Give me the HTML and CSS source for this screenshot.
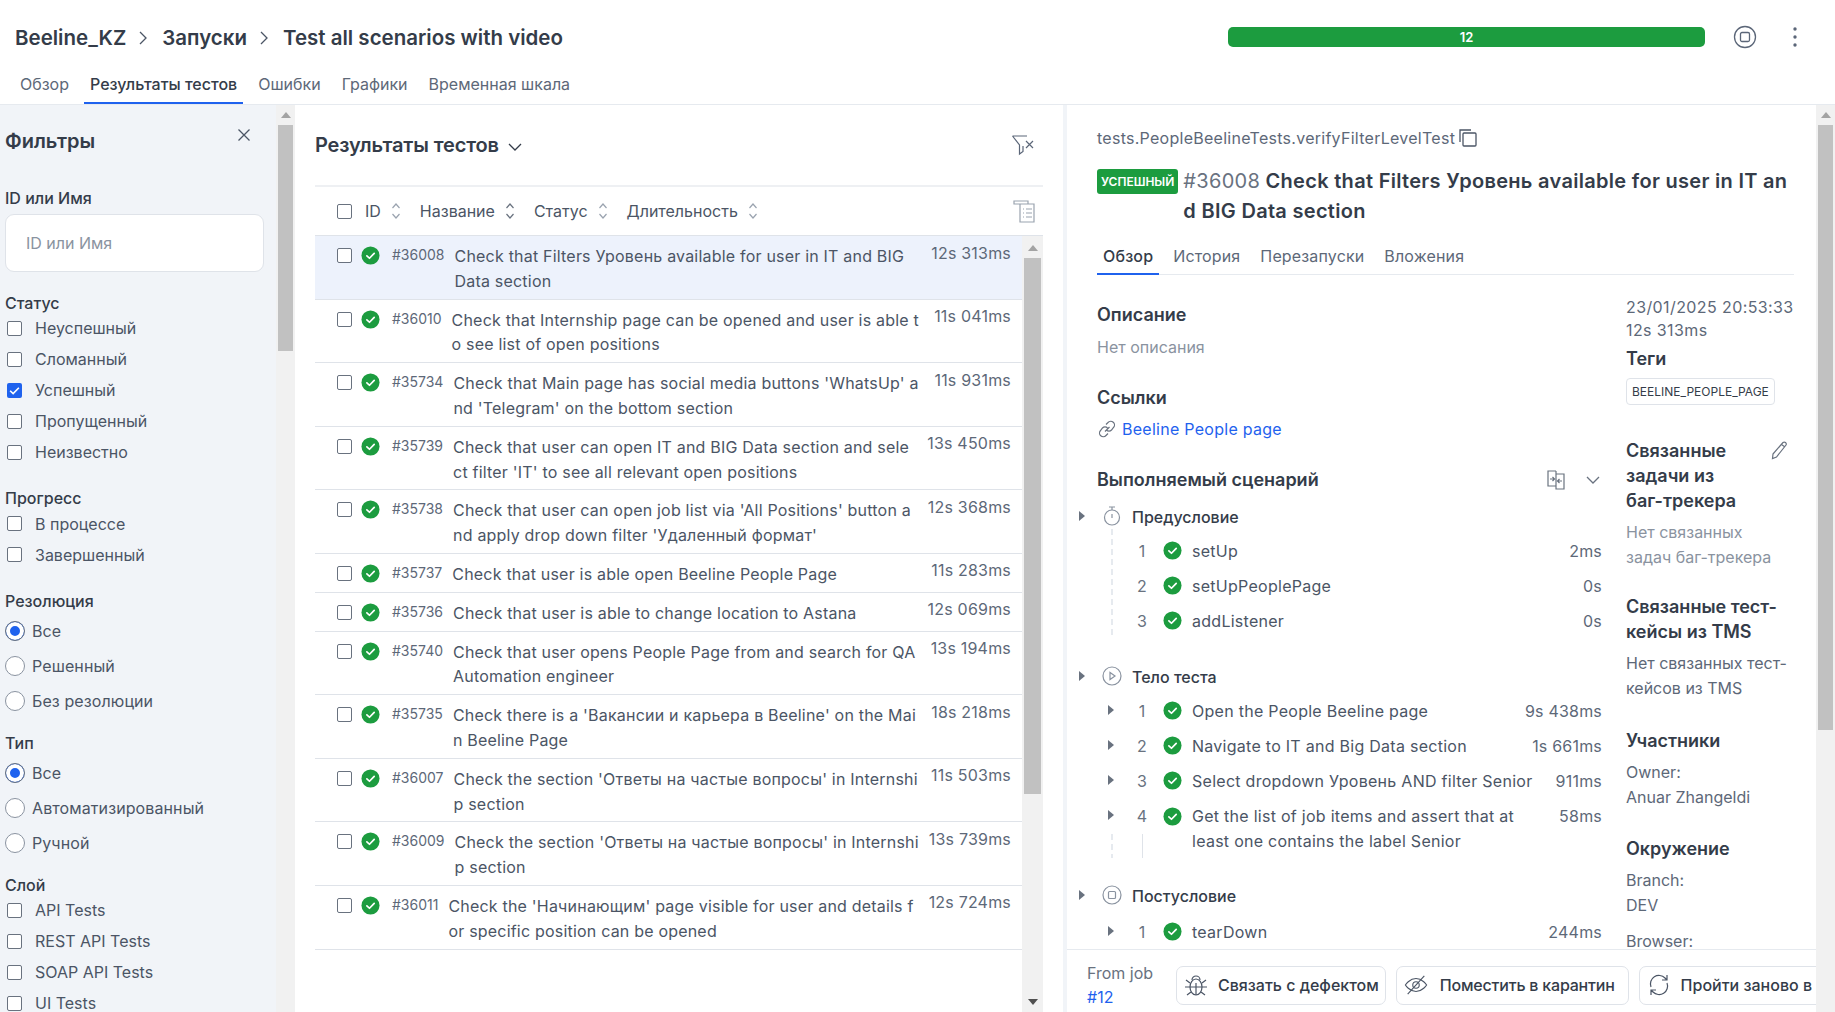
FILE: index.html
```html
<!DOCTYPE html>
<html lang="ru">

<head>
    <meta charset="UTF-8">
    <title>Test all scenarios with video</title>
    <link rel="stylesheet" href="styles.css">
</head>

<body>

    <svg class="defs" width="0" height="0">
        <symbol id="ok" viewBox="0 0 20 20">
            <circle cx="10" cy="10" r="9.5" fill="#1c9c3f"></circle>
            <path d="M6.2 10.3l2.7 2.6 5-5.2" fill="none" stroke="#fff" stroke-width="1.8" stroke-linecap="round" stroke-linejoin="round"></path>
        </symbol>
        <symbol id="chev-r" viewBox="0 0 12 16">
            <path d="M3 2l6 6-6 6" fill="none" stroke="currentColor" stroke-width="1.3"></path>
        </symbol>
        <symbol id="chev-d" viewBox="0 0 16 12">
            <path d="M2 3l6 6 6-6" fill="none" stroke="currentColor" stroke-width="1.3"></path>
        </symbol>
        <symbol id="sort" viewBox="0 0 10 18">
            <path d="M1.5 6L5 2l3.5 4M1.5 12L5 16l3.5-4" fill="none" stroke="currentColor" stroke-width="1.2"></path>
        </symbol>
        <symbol id="tri" viewBox="0 0 8 12">
            <path d="M1 1l6 5-6 5z" fill="#69727f"></path>
        </symbol>
    </svg>

    <div class="app">
        <header class="topbar">
            <div class="topbar-row">
                <div class="crumbs">
                    <span>Beeline_KZ</span>
                    <svg class="crumb-sep"><use href="#chev-r"></use></svg>
                    <span>Запуски</span>
                    <svg class="crumb-sep"><use href="#chev-r"></use></svg>
                    <span>Test all scenarios with video</span>
                </div>
                <div class="progress">12</div>
                <svg class="stop-btn" viewBox="0 0 24 24" fill="none" stroke="#5b6678" stroke-width="1.3">
                    <circle cx="12" cy="12" r="10.5"></circle>
                    <rect x="7.5" y="7.5" width="9" height="9" rx="1.5"></rect>
                </svg>
                <svg class="dots" viewBox="0 0 6 20" fill="#5b6678">
                    <circle cx="3" cy="2" r="1.7"></circle>
                    <circle cx="3" cy="10" r="1.7"></circle>
                    <circle cx="3" cy="18" r="1.7"></circle>
                </svg>
            </div>
            <nav class="tabs">
                <a class="tab">Обзор</a>
                <a class="tab active">Результаты тестов</a>
                <a class="tab">Ошибки</a>
                <a class="tab">Графики</a>
                <a class="tab">Временная шкала</a>
            </nav>
        </header>

        <main class="main">
            <aside class="filters">
                <div class="filters-body">
                    <div class="filters-head">
                        <h2>Фильтры</h2>
                        <svg class="close" viewBox="0 0 14 14" fill="none" stroke="#4b5565" stroke-width="1.3">
                            <path d="M1.5 1.5l11 11M12.5 1.5l-11 11"></path>
                        </svg>
                    </div>

                    <div class="f-title first">ID или Имя</div>
                    <div class="f-input">ID или Имя</div>

                    <div class="f-title">Статус</div>
                    <label class="f-check"><i class="box"></i>Неуспешный</label>
                    <label class="f-check"><i class="box"></i>Сломанный</label>
                    <label class="f-check"><i class="box on"><svg viewBox="0 0 12 12"><path d="M2.5 6.2l2.4 2.3 4.6-4.7" fill="none" stroke="#fff" stroke-width="1.3"></path></svg></i>Успешный</label>
                    <label class="f-check"><i class="box"></i>Пропущенный</label>
                    <label class="f-check"><i class="box"></i>Неизвестно</label>

                    <div class="f-title">Прогресс</div>
                    <label class="f-check"><i class="box"></i>В процессе</label>
                    <label class="f-check"><i class="box"></i>Завершенный</label>

                    <div class="f-title">Резолюция</div>
                    <label class="f-radio"><i class="dot on"></i>Все</label>
                    <label class="f-radio"><i class="dot"></i>Решенный</label>
                    <label class="f-radio"><i class="dot"></i>Без резолюции</label>

                    <div class="f-title tight">Тип</div>
                    <label class="f-radio"><i class="dot on"></i>Все</label>
                    <label class="f-radio"><i class="dot"></i>Автоматизированный</label>
                    <label class="f-radio"><i class="dot"></i>Ручной</label>

                    <div class="f-title tight">Слой</div>
                    <label class="f-check"><i class="box"></i>API Tests</label>
                    <label class="f-check"><i class="box"></i>REST API Tests</label>
                    <label class="f-check"><i class="box"></i>SOAP API Tests</label>
                    <label class="f-check"><i class="box"></i>UI Tests</label>
                </div>
                <div class="scrollbar">
                    <span class="arrow up"></span>
                    <span class="thumb thumb-filters"></span>
                </div>
            </aside>

            <section class="results">
                <div class="results-head">
                    <h2>Результаты тестов</h2>
                    <svg class="title-chev"><use href="#chev-d"></use></svg>
                    <svg class="clear-filter" viewBox="0 0 24 24" fill="none" stroke="#5b6678" stroke-width="1.2">
                        <path d="M1.5 3h14.5M1.5 3l7 9v9l3.5-2.5V13"></path>
                        <path d="M15 8l7 7M22 8l-7 7"></path>
                    </svg>
                </div>
                <div class="table-head">
                    <i class="box"></i>
                    <span class="th th-id">ID</span><svg class="sort"><use href="#sort"></use></svg>
                    <span class="th th-name">Название</span><svg class="sort dark"><use href="#sort"></use></svg>
                    <span class="th th-status">Статус</span><svg class="sort"><use href="#sort"></use></svg>
                    <span class="th th-time">Длительность</span><svg class="sort"><use href="#sort"></use></svg>
                    <svg class="columns" viewBox="0 0 22 23" fill="none" stroke="#9aa3af" stroke-width="1.2">
                        <path d="M1 1h14v3H1zM1 4v0M7 4h14v18H7zM10 9h1M13 9h6M10 13h1M13 13h6M10 17h1M13 17h6"></path>
                    </svg>
                </div>
                <div class="table-wrap">
                    <div class="rows">
                        <div class="row selected">
                            <i class="box"></i><svg class="ok"><use href="#ok"></use></svg>
                            <span class="row-id">#36008</span>
                            <span class="row-name">Check that Filters Уровень available for user in IT and BIG<br>Data section</span>
                            <span class="row-time">12s 313ms</span>
                        </div>
                        <div class="row">
                            <i class="box"></i><svg class="ok"><use href="#ok"></use></svg>
                            <span class="row-id">#36010</span>
                            <span class="row-name">Check that Internship page can be opened and user is able t<br>o see list of open positions</span>
                            <span class="row-time">11s 041ms</span>
                        </div>
                        <div class="row">
                            <i class="box"></i><svg class="ok"><use href="#ok"></use></svg>
                            <span class="row-id">#35734</span>
                            <span class="row-name">Check that Main page has social media buttons 'WhatsUp' a<br>nd 'Telegram' on the bottom section</span>
                            <span class="row-time">11s 931ms</span>
                        </div>
                        <div class="row">
                            <i class="box"></i><svg class="ok"><use href="#ok"></use></svg>
                            <span class="row-id">#35739</span>
                            <span class="row-name">Check that user can open IT and BIG Data section and sele<br>ct filter 'IT' to see all relevant open positions</span>
                            <span class="row-time">13s 450ms</span>
                        </div>
                        <div class="row">
                            <i class="box"></i><svg class="ok"><use href="#ok"></use></svg>
                            <span class="row-id">#35738</span>
                            <span class="row-name">Check that user can open job list via 'All Positions' button a<br>nd apply drop down filter 'Удаленный формат'</span>
                            <span class="row-time">12s 368ms</span>
                        </div>
                        <div class="row">
                            <i class="box"></i><svg class="ok"><use href="#ok"></use></svg>
                            <span class="row-id">#35737</span>
                            <span class="row-name">Check that user is able open Beeline People Page</span>
                            <span class="row-time">11s 283ms</span>
                        </div>
                        <div class="row">
                            <i class="box"></i><svg class="ok"><use href="#ok"></use></svg>
                            <span class="row-id">#35736</span>
                            <span class="row-name">Check that user is able to change location to Astana</span>
                            <span class="row-time">12s 069ms</span>
                        </div>
                        <div class="row">
                            <i class="box"></i><svg class="ok"><use href="#ok"></use></svg>
                            <span class="row-id">#35740</span>
                            <span class="row-name">Check that user opens People Page from and search for QA<br>Automation engineer</span>
                            <span class="row-time">13s 194ms</span>
                        </div>
                        <div class="row">
                            <i class="box"></i><svg class="ok"><use href="#ok"></use></svg>
                            <span class="row-id">#35735</span>
                            <span class="row-name">Check there is a 'Вакансии и карьера в Beeline' on the Mai<br>n Beeline Page</span>
                            <span class="row-time">18s 218ms</span>
                        </div>
                        <div class="row">
                            <i class="box"></i><svg class="ok"><use href="#ok"></use></svg>
                            <span class="row-id">#36007</span>
                            <span class="row-name">Check the section 'Ответы на частые вопросы' in Internshi<br>p section</span>
                            <span class="row-time">11s 503ms</span>
                        </div>
                        <div class="row">
                            <i class="box"></i><svg class="ok"><use href="#ok"></use></svg>
                            <span class="row-id">#36009</span>
                            <span class="row-name">Check the section 'Ответы на частые вопросы' in Internshi<br>p section</span>
                            <span class="row-time">13s 739ms</span>
                        </div>
                        <div class="row">
                            <i class="box"></i><svg class="ok"><use href="#ok"></use></svg>
                            <span class="row-id">#36011</span>
                            <span class="row-name">Check the 'Начинающим' page visible for user and details f<br>or specific position can be opened</span>
                            <span class="row-time">12s 724ms</span>
                        </div>
                    </div>
                    <div class="scrollbar thin">
                        <span class="arrow up"></span>
                        <span class="thumb thumb-rows"></span>
                        <span class="arrow down"></span>
                    </div>
                </div>
            </section>

            <section class="details">
                <div class="details-scroll">
                    <div class="path">
                        <span>tests.PeopleBeelineTests.verifyFilterLevelTest</span>
                        <svg class="copy" viewBox="0 0 18 18" fill="none" stroke="#4b5565" stroke-width="1.3">
                            <path d="M1 13V1h11"></path>
                            <rect x="4" y="4" width="13" height="13" rx="1"></rect>
                        </svg>
                    </div>
                    <div class="test-title">
                        <span class="badge">УСПЕШНЫЙ</span>
                        <h1><span class="test-id">#36008</span> Check that Filters Уровень available for user in IT an<br>d BIG Data section</h1>
                    </div>
                    <nav class="subtabs">
                        <a class="subtab active">Обзор</a>
                        <a class="subtab">История</a>
                        <a class="subtab">Перезапуски</a>
                        <a class="subtab">Вложения</a>
                    </nav>

                    <div class="columns-wrap">
                        <div class="col-main">
                            <h3>Описание</h3>
                            <p class="muted">Нет описания</p>
                            <h3 class="links-h">Ссылки</h3>
                            <a class="link">
                                <svg class="link-ico" viewBox="0 0 20 20" fill="none" stroke="#69727f" stroke-width="1.2">
                                    <path d="M8 12.5l4.5-4.5M9 5.5l2-2a3.5 3.5 0 0 1 5.5 5l-2 2.5a3.5 3.5 0 0 1-5 0M11 14.5l-2 2a3.5 3.5 0 0 1-5.5-5l2-2.5a3.5 3.5 0 0 1 5 0"></path>
                                </svg>
                                Beeline People page
                            </a>
                            <div class="scenario-head">
                                <h3>Выполняемый сценарий</h3>
                                <svg class="split" viewBox="0 0 18 20" fill="none" stroke="#69727f" stroke-width="1.2">
                                    <path d="M9 1H1v15h8M9 1v18h8V4H9M3 9h4M5.5 7L7.5 9l-2 2M15 11h-4M12.5 9l-2 2 2 2"></path>
                                </svg>
                                <svg class="scenario-chev"><use href="#chev-d"></use></svg>
                            </div>

                            <div class="stage">
                                <svg class="tri"><use href="#tri"></use></svg>
                                <svg class="stage-ico" viewBox="0 0 18 20" fill="none" stroke="#8a93a0" stroke-width="1.2">
                                    <circle cx="9" cy="11.5" r="7.5"></circle>
                                    <path d="M6 1h6M9 1v3M9 8v4"></path>
                                </svg>
                                <span>Предусловие</span>
                            </div>
                            <div class="steps guide">
                                <div class="step"><span class="num">1</span><svg class="ok"><use href="#ok"></use></svg><span class="step-name">setUp</span><span class="step-time">2ms</span></div>
                                <div class="step"><span class="num">2</span><svg class="ok"><use href="#ok"></use></svg><span class="step-name">setUpPeoplePage</span><span class="step-time">0s</span></div>
                                <div class="step"><span class="num">3</span><svg class="ok"><use href="#ok"></use></svg><span class="step-name">addListener</span><span class="step-time">0s</span></div>
                            </div>

                            <div class="stage body-stage">
                                <svg class="tri"><use href="#tri"></use></svg>
                                <svg class="stage-ico" viewBox="0 0 20 20" fill="none" stroke="#8a93a0" stroke-width="1.2">
                                    <circle cx="10" cy="10" r="9"></circle>
                                    <path d="M8 6.5v7l5-3.5z"></path>
                                </svg>
                                <span>Тело теста</span>
                            </div>
                            <div class="steps">
                                <div class="step"><svg class="tri step-tri"><use href="#tri"></use></svg><span class="num">1</span><svg class="ok"><use href="#ok"></use></svg><span class="step-name">Open the People Beeline page</span><span class="step-time">9s 438ms</span></div>
                                <div class="step"><svg class="tri step-tri"><use href="#tri"></use></svg><span class="num">2</span><svg class="ok"><use href="#ok"></use></svg><span class="step-name">Navigate to IT and Big Data section</span><span class="step-time">1s 661ms</span></div>
                                <div class="step"><svg class="tri step-tri"><use href="#tri"></use></svg><span class="num">3</span><svg class="ok"><use href="#ok"></use></svg><span class="step-name">Select dropdown Уровень AND filter Senior</span><span class="step-time">911ms</span></div>
                                <div class="step step-long"><svg class="tri step-tri"><use href="#tri"></use></svg><span class="num">4</span><svg class="ok"><use href="#ok"></use></svg><span class="step-name">Get the list of job items and assert that at<br>least one contains the label Senior</span><span class="step-time">58ms</span></div>
                            </div>

                            <div class="stage post-stage">
                                <svg class="tri"><use href="#tri"></use></svg>
                                <svg class="stage-ico" viewBox="0 0 20 20" fill="none" stroke="#8a93a0" stroke-width="1.2">
                                    <circle cx="10" cy="10" r="9"></circle>
                                    <rect x="6.5" y="6.5" width="7" height="7" rx="1"></rect>
                                </svg>
                                <span>Постусловие</span>
                            </div>
                            <div class="steps">
                                <div class="step"><svg class="tri step-tri"><use href="#tri"></use></svg><span class="num">1</span><svg class="ok"><use href="#ok"></use></svg><span class="step-name">tearDown</span><span class="step-time">244ms</span></div>
                            </div>
                        </div>

                        <div class="col-side">
                            <div class="stamp">23/01/2025 20:53:33<br>12s 313ms</div>
                            <h3 class="tags-h">Теги</h3>
                            <span class="tag">BEELINE_PEOPLE_PAGE</span>

                            <div class="side-edit">
                                <h3>Связанные<br>задачи из<br>баг-трекера</h3>
                                <svg class="pencil" viewBox="0 0 18 20" fill="none" stroke="#69727f" stroke-width="1.2">
                                    <path d="M2 14L12 2.5a2 2 0 0 1 3 2.5L5.5 17 1.5 18.5zM10.5 4.5l3.5 2.5"></path>
                                </svg>
                            </div>
                            <p class="muted side-note">Нет связанных<br>задач баг-трекера</p>

                            <h3 class="side-h">Связанные тест-<br>кейсы из TMS</h3>
                            <p class="side-note dim">Нет связанных тест-<br>кейсов из TMS</p>

                            <h3 class="side-h people">Участники</h3>
                            <p class="side-note dim">Owner:<br>Anuar Zhangeldi</p>

                            <h3 class="side-h env">Окружение</h3>
                            <p class="side-note dim">Branch:<br>DEV</p>
                            <p class="side-note dim browser">Browser:</p>
                        </div>
                    </div>
                </div>

                <footer class="actions">
                    <div class="job">From job<br><a>#12</a></div>
                    <button class="act defect">
                        <svg viewBox="0 0 24 24" fill="none" stroke="#4b5565" stroke-width="1.2">
                            <ellipse cx="12" cy="14" rx="6" ry="8"></ellipse>
                            <path d="M8 7a4 4 0 0 1 8 0M6 14h12M12 10v12M6 10L2 7M18 10l4-3M6 14H1M18 14h5M7 19l-4 3M17 19l4 3"></path>
                        </svg>
                        Связать с дефектом
                    </button>
                    <button class="act quarantine">
                        <svg viewBox="0 0 26 24" fill="none" stroke="#4b5565" stroke-width="1.2">
                            <path d="M1.5 12S6 5 13 5s11.5 7 11.5 7-4.5 7-11.5 7S1.5 12 1.5 12z"></path>
                            <circle cx="13" cy="12" r="3.5"></circle>
                            <path d="M4 22L22 2"></path>
                        </svg>
                        Поместить в карантин
                    </button>
                    <button class="act last">
                        <svg viewBox="0 0 24 24" fill="none" stroke="#4b5565" stroke-width="1.2">
                            <path d="M4 14a8.5 8.5 0 0 1 14-9l2 2M20 2v5h-5M20 10a8.5 8.5 0 0 1-14 9l-2-2M4 22v-5h5"></path>
                        </svg>
                        Пройти заново в
                    </button>
                </footer>
            </section>

            <div class="scrollbar">
                <span class="arrow up"></span>
                <span class="thumb thumb-details"></span>
            </div>
        </main>
    </div>

</body>

</html>
```

FILE: styles.css
```css
* {
  box-sizing: border-box;
}

html,
body {
  margin: 0;
  height: 100%;
  overflow: hidden;
}

body {
  font-family: Inter, "Noto Sans", sans-serif;
  font-size: 16px;
  color: #343c49;
  background: #fff;
}

h1,
h2,
h3,
p {
  margin: 0;
}

.defs {
  position: absolute;
}

.app {
  display: flex;
  flex-direction: column;
  height: 100vh;
}

/* top bar */
.topbar {
  height: 105px;
  flex: none;
  border-bottom: 1px solid #e6eaef;
}

.topbar-row {
  display: flex;
  align-items: center;
  height: 74px;
  padding-left: 15px;
}

.crumbs {
  display: flex;
  align-items: center;
  width: 1213px;
  font-size: 20.5px;
  font-weight: 600;
}

.crumb-sep {
  width: 12px;
  height: 16px;
  margin: 2px 13px 0 11px;
  color: #4b5565;
}

.progress {
  width: 477px;
  height: 20px;
  border-radius: 5px;
  background: #1c9c3f;
  color: #fff;
  font-size: 13px;
  font-weight: 600;
  line-height: 20px;
  text-align: center;
}

.stop-btn {
  width: 24px;
  height: 24px;
  margin-left: 28px;
}

.dots {
  width: 6px;
  height: 20px;
  margin-left: 35px;
}

.tabs {
  display: flex;
  gap: 9px;
  padding-left: 14px;
  height: 30px;
}

.tab {
  height: 30px;
  padding: 0 6px;
  color: #5d6878;
  line-height: 20px;
}

.tab.active {
  color: #343c49;
  font-weight: 500;
  border-bottom: 2px solid #1f62ee;
}

/* layout */
.main {
  display: flex;
  flex: 1;
  min-height: 0;
}

.scrollbar {
  display: flex;
  flex-direction: column;
  flex: none;
  width: 19px;
  background: #f1f1f1;
}

.arrow {
  flex: none;
  height: 20px;
  display: flex;
  align-items: center;
  justify-content: center;
}

.arrow::after {
  content: "";
  border-left: 5px solid transparent;
  border-right: 5px solid transparent;
}

.arrow.up::after {
  border-bottom: 6px solid #a3a3a3;
}

.arrow.down {
  margin-top: auto;
}

.arrow.down::after {
  border-top: 6px solid #505050;
}

.thumb {
  flex: none;
  margin: 0 2px;
  background: #c1c1c1;
}

.thumb-filters {
  height: 226px;
}

.thumb-rows {
  height: 536px;
}

.thumb-details {
  height: 605px;
}

/* filters */
.filters {
  display: flex;
  flex: none;
  width: 295px;
  overflow: hidden;
}

.filters-body {
  width: 276px;
  flex: none;
  padding: 21px 12px 0 5px;
  background: #f1f4f8;
}

.filters-head {
  display: flex;
  align-items: center;
  justify-content: space-between;
  height: 30px;
}

.filters-head h2 {
  font-size: 20px;
  font-weight: 600;
}

.close {
  width: 14px;
  height: 14px;
  margin: 0 13px 12px 0;
}

.f-title {
  height: 20px;
  margin-top: 20.5px;
  font-weight: 500;
  line-height: 20px;
}

.f-title.first {
  margin-top: 32px;
}

.f-title.tight {
  margin-top: 14px;
}

.f-input {
  height: 58px;
  margin-top: 6px;
  padding-left: 20px;
  border: 1px solid #dfe3e9;
  border-radius: 9px;
  background: #fff;
  color: #8a93a0;
  line-height: 56px;
}

.f-check,
.f-radio {
  display: flex;
  align-items: center;
  color: #4b5565;
}

.f-check {
  height: 31px;
  padding-left: 2px;
  gap: 13px;
}

.f-radio {
  height: 35px;
  gap: 7px;
  letter-spacing: 0.1px;
}

.f-title + .f-radio {
  margin-top: 3px;
}

.box {
  display: block;
  flex: none;
  width: 15px;
  height: 15px;
  border: 1.5px solid #69727f;
  border-radius: 2px;
  background: #fff;
}

.box.on {
  border: none;
  background: #1f62ee;
}

.box svg {
  display: block;
  width: 15px;
  height: 15px;
}

.dot {
  display: block;
  flex: none;
  width: 20px;
  height: 20px;
  border: 1px solid #8a93a0;
  border-radius: 50%;
  background: #fff;
}

.dot.on {
  border-color: #69727f;
  box-shadow: inset 0 0 0 4px #fff;
  background: #1f62ee;
}

/* results table */
.results {
  display: flex;
  flex-direction: column;
  flex: none;
  width: 768px;
  padding: 0 20px;
}

.results-head {
  display: flex;
  align-items: center;
  flex: none;
  height: 80px;
}

.results-head h2 {
  font-size: 20px;
  font-weight: 600;
  letter-spacing: -0.15px;
}

.title-chev {
  width: 16px;
  height: 12px;
  margin: 3px 0 0 8px;
  color: #343c49;
}

.clear-filter {
  width: 24px;
  height: 24px;
  margin-left: auto;
  margin-right: 8px;
}

.table-head {
  display: flex;
  align-items: center;
  flex: none;
  height: 51px;
  padding-left: 22px;
  border-top: 2px solid #eef0f3;
  border-bottom: 1px solid #dfe3e9;
  color: #4b5565;
}

.th {
  white-space: nowrap;
}

.th-id {
  margin-left: 13px;
}

.th-name,
.th-status,
.th-time {
  margin-left: 19px;
}

.sort {
  width: 10px;
  height: 18px;
  margin-left: 10px;
  color: #9aa3af;
}

.sort.dark {
  color: #69727f;
}

.columns {
  width: 22px;
  height: 23px;
  margin-left: auto;
  margin-right: 8px;
}

.table-wrap {
  display: flex;
  flex: 1;
  min-height: 0;
}

.rows {
  flex: 1;
  min-width: 0;
}

.row {
  display: flex;
  align-items: flex-start;
  padding: 8px 11px 5px 22px;
  border-bottom: 1px solid #dfe3e9;
  line-height: 24.8px;
}

.row.selected {
  background: #edf2fc;
}

.row .box {
  margin-top: 4px;
}

.ok {
  flex: none;
  width: 19px;
  height: 19px;
}

.row .ok {
  margin: 2px 0 0 9px;
}

.row-id {
  flex: none;
  margin-left: 12px;
  color: #5d6878;
  font-size: 14px;
  line-height: 22px;
}

.row-name {
  flex: 1;
  margin-left: 10px;
  color: #4b5565;
  white-space: nowrap;
  letter-spacing: 0.2px;
}

.row-time {
  flex: none;
  margin-top: -3.5px;
  color: #5d6878;
  letter-spacing: 0.2px;
}

.scrollbar.thin {
  width: 21px;
  padding-top: 2px;
}

/* details */
.details {
  display: flex;
  flex-direction: column;
  flex: none;
  width: 753px;
  min-height: 0;
  border-left: 4px solid #f1f4f8;
}

.details-scroll {
  flex: 1;
  min-height: 0;
  overflow: hidden;
  padding: 21px 22px 0 30px;
}

.path {
  display: flex;
  align-items: center;
  gap: 4px;
  height: 24px;
  color: #5d6878;
  letter-spacing: 0.27px;
}

.copy {
  width: 18px;
  height: 18px;
}

.test-title {
  display: flex;
  align-items: flex-start;
  gap: 5px;
  margin-top: 19px;
}

.badge {
  flex: none;
  height: 25px;
  padding: 0 4px;
  border-radius: 3px;
  background: #1c9c3f;
  color: #fff;
  font-size: 12px;
  font-weight: 600;
  line-height: 25px;
}

.test-title h1 {
  font-size: 20px;
  font-weight: 600;
  letter-spacing: 0.3px;
  line-height: 30px;
  margin-top: -3px;
  white-space: nowrap;
}

.test-id {
  color: #69727f;
  font-weight: 400;
}

.subtabs {
  display: flex;
  gap: 8px;
  height: 34px;
  margin-top: 15px;
  border-bottom: 1px solid #e6eaef;
  letter-spacing: 0.15px;
}

.subtab {
  height: 34px;
  padding: 0 6px;
  color: #5d6878;
  line-height: 31px;
}

.subtab.active {
  color: #343c49;
  font-weight: 500;
  border-bottom: 2px solid #1f62ee;
}

.columns-wrap {
  display: flex;
  justify-content: space-between;
}

.col-main {
  position: relative;
  width: 505px;
  padding-top: 27px;
}

h3 {
  font-size: 18px;
  font-weight: 600;
  line-height: 25px;
}

.muted {
  color: #8a93a0;
}

.col-main > .muted {
  margin-top: 8px;
  line-height: 24px;
}

.links-h {
  margin-top: 26px;
}

.link {
  display: flex;
  align-items: center;
  gap: 5px;
  margin-top: 6px;
  height: 25px;
  color: #1f62ee;
  letter-spacing: 0.27px;
}

.link-ico {
  width: 20px;
  height: 20px;
}

.scenario-head {
  display: flex;
  align-items: center;
  margin-top: 26px;
  padding-right: 1px;
}

.split {
  width: 18px;
  height: 20px;
  margin-left: auto;
}

.scenario-chev {
  width: 16px;
  height: 12px;
  margin-left: 20px;
  color: #69727f;
}

/* scenario tree, triangle and guide lines hang left of the column */
.stage {
  display: flex;
  align-items: center;
  height: 25px;
  margin-top: 12px;
  font-weight: 500;
  position: relative;
  padding-left: 35px;
}

.tri {
  width: 8px;
  height: 12px;
}

.stage .tri {
  position: absolute;
  left: -19px;
  top: 6px;
}

.stage-ico {
  position: absolute;
  left: 5px;
  top: 2px;
  width: 20px;
  height: 20px;
}

.body-stage {
  margin-top: 26px;
}

.post-stage {
  margin-top: 25px;
}

.steps {
  padding-top: 4px;
}

.post-stage + .steps {
  padding-top: 6px;
}

.steps.guide {
  background: linear-gradient(#e6eaef 60%, transparent 60%) 14px 0 / 2px 10px repeat-y;
}

.step {
  display: flex;
  align-items: center;
  position: relative;
  min-height: 35px;
  padding-left: 38px;
}

.step-tri {
  position: absolute;
  left: 10px;
  top: 11px;
}

.step-long {
  align-items: flex-start;
  padding-top: 6px;
  padding-bottom: 4px;
  line-height: 25px;
}

.step-long .ok {
  margin-top: 3px;
}

.step-long::before {
  content: "";
  position: absolute;
  left: 45px;
  top: 36px;
  bottom: 0;
  width: 1px;
  background: #dfe3e9;
}

.step-long::after {
  content: "";
  position: absolute;
  left: 14px;
  top: 36px;
  bottom: 0;
  width: 2px;
  background: linear-gradient(#e6eaef 60%, transparent 60%) 0 0 / 2px 10px repeat-y;
}

.num {
  flex: none;
  width: 14px;
  text-align: center;
  color: #69727f;
}

.step .ok {
  margin-left: 14px;
}

.step-name {
  flex: 1;
  margin-left: 10px;
  color: #4b5565;
  white-space: nowrap;
  letter-spacing: 0.27px;
}

.step-time {
  flex: none;
  color: #5d6878;
  letter-spacing: 0.2px;
}

.col-side {
  width: 168px;
  padding-top: 21px;
}

.stamp {
  color: #5d6878;
  line-height: 23px;
  white-space: nowrap;
  letter-spacing: 0.4px;
}

.tags-h {
  margin-top: 4px;
}

.tag {
  display: inline-block;
  height: 27px;
  margin-top: 7px;
  padding: 0 5px;
  border: 1px solid #dfe3e9;
  border-radius: 4px;
  color: #343c49;
  font-size: 12px;
  line-height: 25px;
  white-space: nowrap;
}

.side-edit {
  display: flex;
  justify-content: space-between;
  margin-top: 33px;
}

.pencil {
  width: 18px;
  height: 20px;
  margin: 2px 5px 0 0;
}

.side-note {
  margin-top: 7px;
  line-height: 25px;
  white-space: nowrap;
}

.side-note.dim {
  color: #5d6878;
}

.side-h {
  margin-top: 24px;
  white-space: nowrap;
}

.side-h.people {
  margin-top: 27px;
}

.side-h.env {
  margin-top: 26px;
}

.browser {
  margin-top: 11px;
}

/* footer */
.actions {
  display: flex;
  align-items: center;
  flex: none;
  gap: 10px;
  height: 63px;
  padding: 8px 0 0 20px;
  border-top: 1px solid #e6eaef;
  overflow: hidden;
  background: #fff;
}

.job {
  flex: none;
  width: 79px;
  color: #69727f;
  line-height: 24px;
}

.job a {
  color: #1f62ee;
}

.act {
  display: flex;
  align-items: center;
  flex: none;
  gap: 10px;
  height: 39px;
  padding: 0 7px;
  border: 1px solid #dfe3e9;
  border-radius: 7px;
  background: #fff;
  color: #343c49;
  font-family: inherit;
  font-size: 16px;
  font-weight: 500;
  white-space: nowrap;
}

.act.defect {
  padding-right: 6px;
}

.act.quarantine {
  gap: 12px;
  padding-right: 13px;
  letter-spacing: -0.2px;
}

.act.last {
  padding-right: 60px;
}

.act svg {
  width: 24px;
  height: 24px;
}
```
